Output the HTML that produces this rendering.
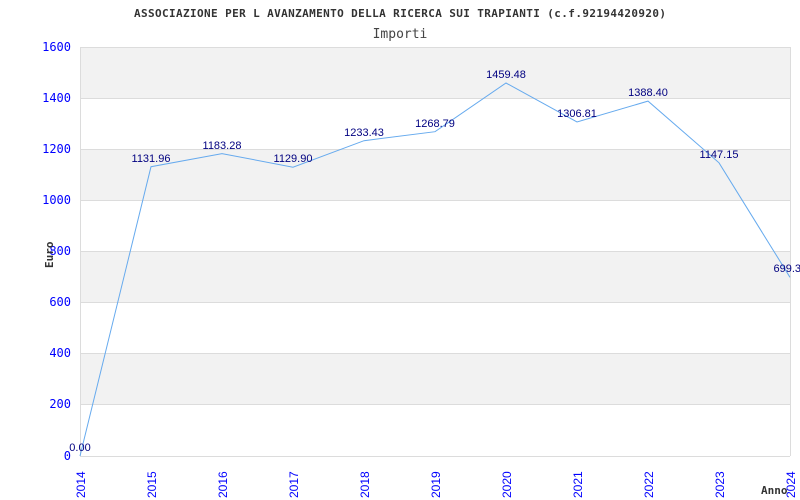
<!DOCTYPE html>
<html><head><meta charset="utf-8"><style>
html,body{margin:0;padding:0;background:#fff;width:800px;height:500px;overflow:hidden}
svg{display:block}
.yl{font-family:"DejaVu Sans Mono","Liberation Mono",monospace;font-size:12px;fill:#0000ff}
.xl{font-family:"Liberation Sans",sans-serif;font-size:12px;fill:#0000ff}
.vl{font-family:"Liberation Sans",sans-serif;font-size:11px;fill:#000080}
</style></head><body>
<svg width="800" height="500" viewBox="0 0 800 500">
<text x="134" y="17" textLength="532" lengthAdjust="spacing" font-family="DejaVu Sans Mono,Liberation Mono,monospace" font-size="11" font-weight="bold" fill="#333">ASSOCIAZIONE PER L AVANZAMENTO DELLA RICERCA SUI TRAPIANTI (c.f.92194420920)</text>
<text x="400" y="38" text-anchor="middle" font-family="DejaVu Sans Mono,Liberation Mono,monospace" font-size="13" fill="#444">Importi</text>
<g fill="#f2f2f2">
<rect x="80" y="47" width="710" height="51.1"/>
<rect x="80" y="149.2" width="710" height="51.1"/>
<rect x="80" y="251.4" width="710" height="51.1"/>
<rect x="80" y="353.6" width="710" height="51.1"/>
</g>
<g stroke="#dcdcdc" stroke-width="1">
<line x1="80" y1="47.5" x2="790" y2="47.5"/>
<line x1="80" y1="98.5" x2="790" y2="98.5"/>
<line x1="80" y1="149.5" x2="790" y2="149.5"/>
<line x1="80" y1="200.5" x2="790" y2="200.5"/>
<line x1="80" y1="251.5" x2="790" y2="251.5"/>
<line x1="80" y1="302.5" x2="790" y2="302.5"/>
<line x1="80" y1="353.5" x2="790" y2="353.5"/>
<line x1="80" y1="404.5" x2="790" y2="404.5"/>
<line x1="80" y1="456.5" x2="790" y2="456.5"/>
<line x1="80.5" y1="47" x2="80.5" y2="456"/>
<line x1="790.5" y1="47" x2="790.5" y2="456"/>
</g>
<g class="yl" text-anchor="end">
<text x="71" y="51">1600</text><text x="71" y="102">1400</text><text x="71" y="153">1200</text><text x="71" y="204">1000</text><text x="71" y="255">800</text><text x="71" y="306">600</text><text x="71" y="357">400</text><text x="71" y="408">200</text><text x="71" y="460">0</text>
</g>
<text transform="translate(53,268) rotate(-90)" font-family="DejaVu Sans Mono,Liberation Mono,monospace" font-size="11" font-weight="bold" fill="#333">Euro</text>
<g class="xl">
<text transform="translate(85,498) rotate(-90)">2014</text>
<text transform="translate(156,498) rotate(-90)">2015</text>
<text transform="translate(227,498) rotate(-90)">2016</text>
<text transform="translate(298,498) rotate(-90)">2017</text>
<text transform="translate(369,498) rotate(-90)">2018</text>
<text transform="translate(440,498) rotate(-90)">2019</text>
<text transform="translate(511,498) rotate(-90)">2020</text>
<text transform="translate(582,498) rotate(-90)">2021</text>
<text transform="translate(653,498) rotate(-90)">2022</text>
<text transform="translate(724,498) rotate(-90)">2023</text>
<text transform="translate(795,498) rotate(-90)">2024</text>
</g>
<text x="761" y="494" font-family="DejaVu Sans Mono,Liberation Mono,monospace" font-size="11" font-weight="bold" fill="#333">Anno</text>
<polyline fill="none" stroke="#66aaee" stroke-width="1" points="80,456 151,166.7 222,153.6 293,167.2 364,140.7 435,131.7 506,83 577,122 648,101.1 719,162.8 790,277.3"/>
<g class="vl" text-anchor="middle">
<text x="80" y="451">0.00</text>
<text x="151" y="162">1131.96</text>
<text x="222" y="149">1183.28</text>
<text x="293" y="162">1129.90</text>
<text x="364" y="136">1233.43</text>
<text x="435" y="127">1268.79</text>
<text x="506" y="78">1459.48</text>
<text x="577" y="117">1306.81</text>
<text x="648" y="96">1388.40</text>
<text x="719" y="158">1147.15</text>
<text x="801" y="272" text-anchor="end">699.3</text>
</g>
</svg>
</body></html>
